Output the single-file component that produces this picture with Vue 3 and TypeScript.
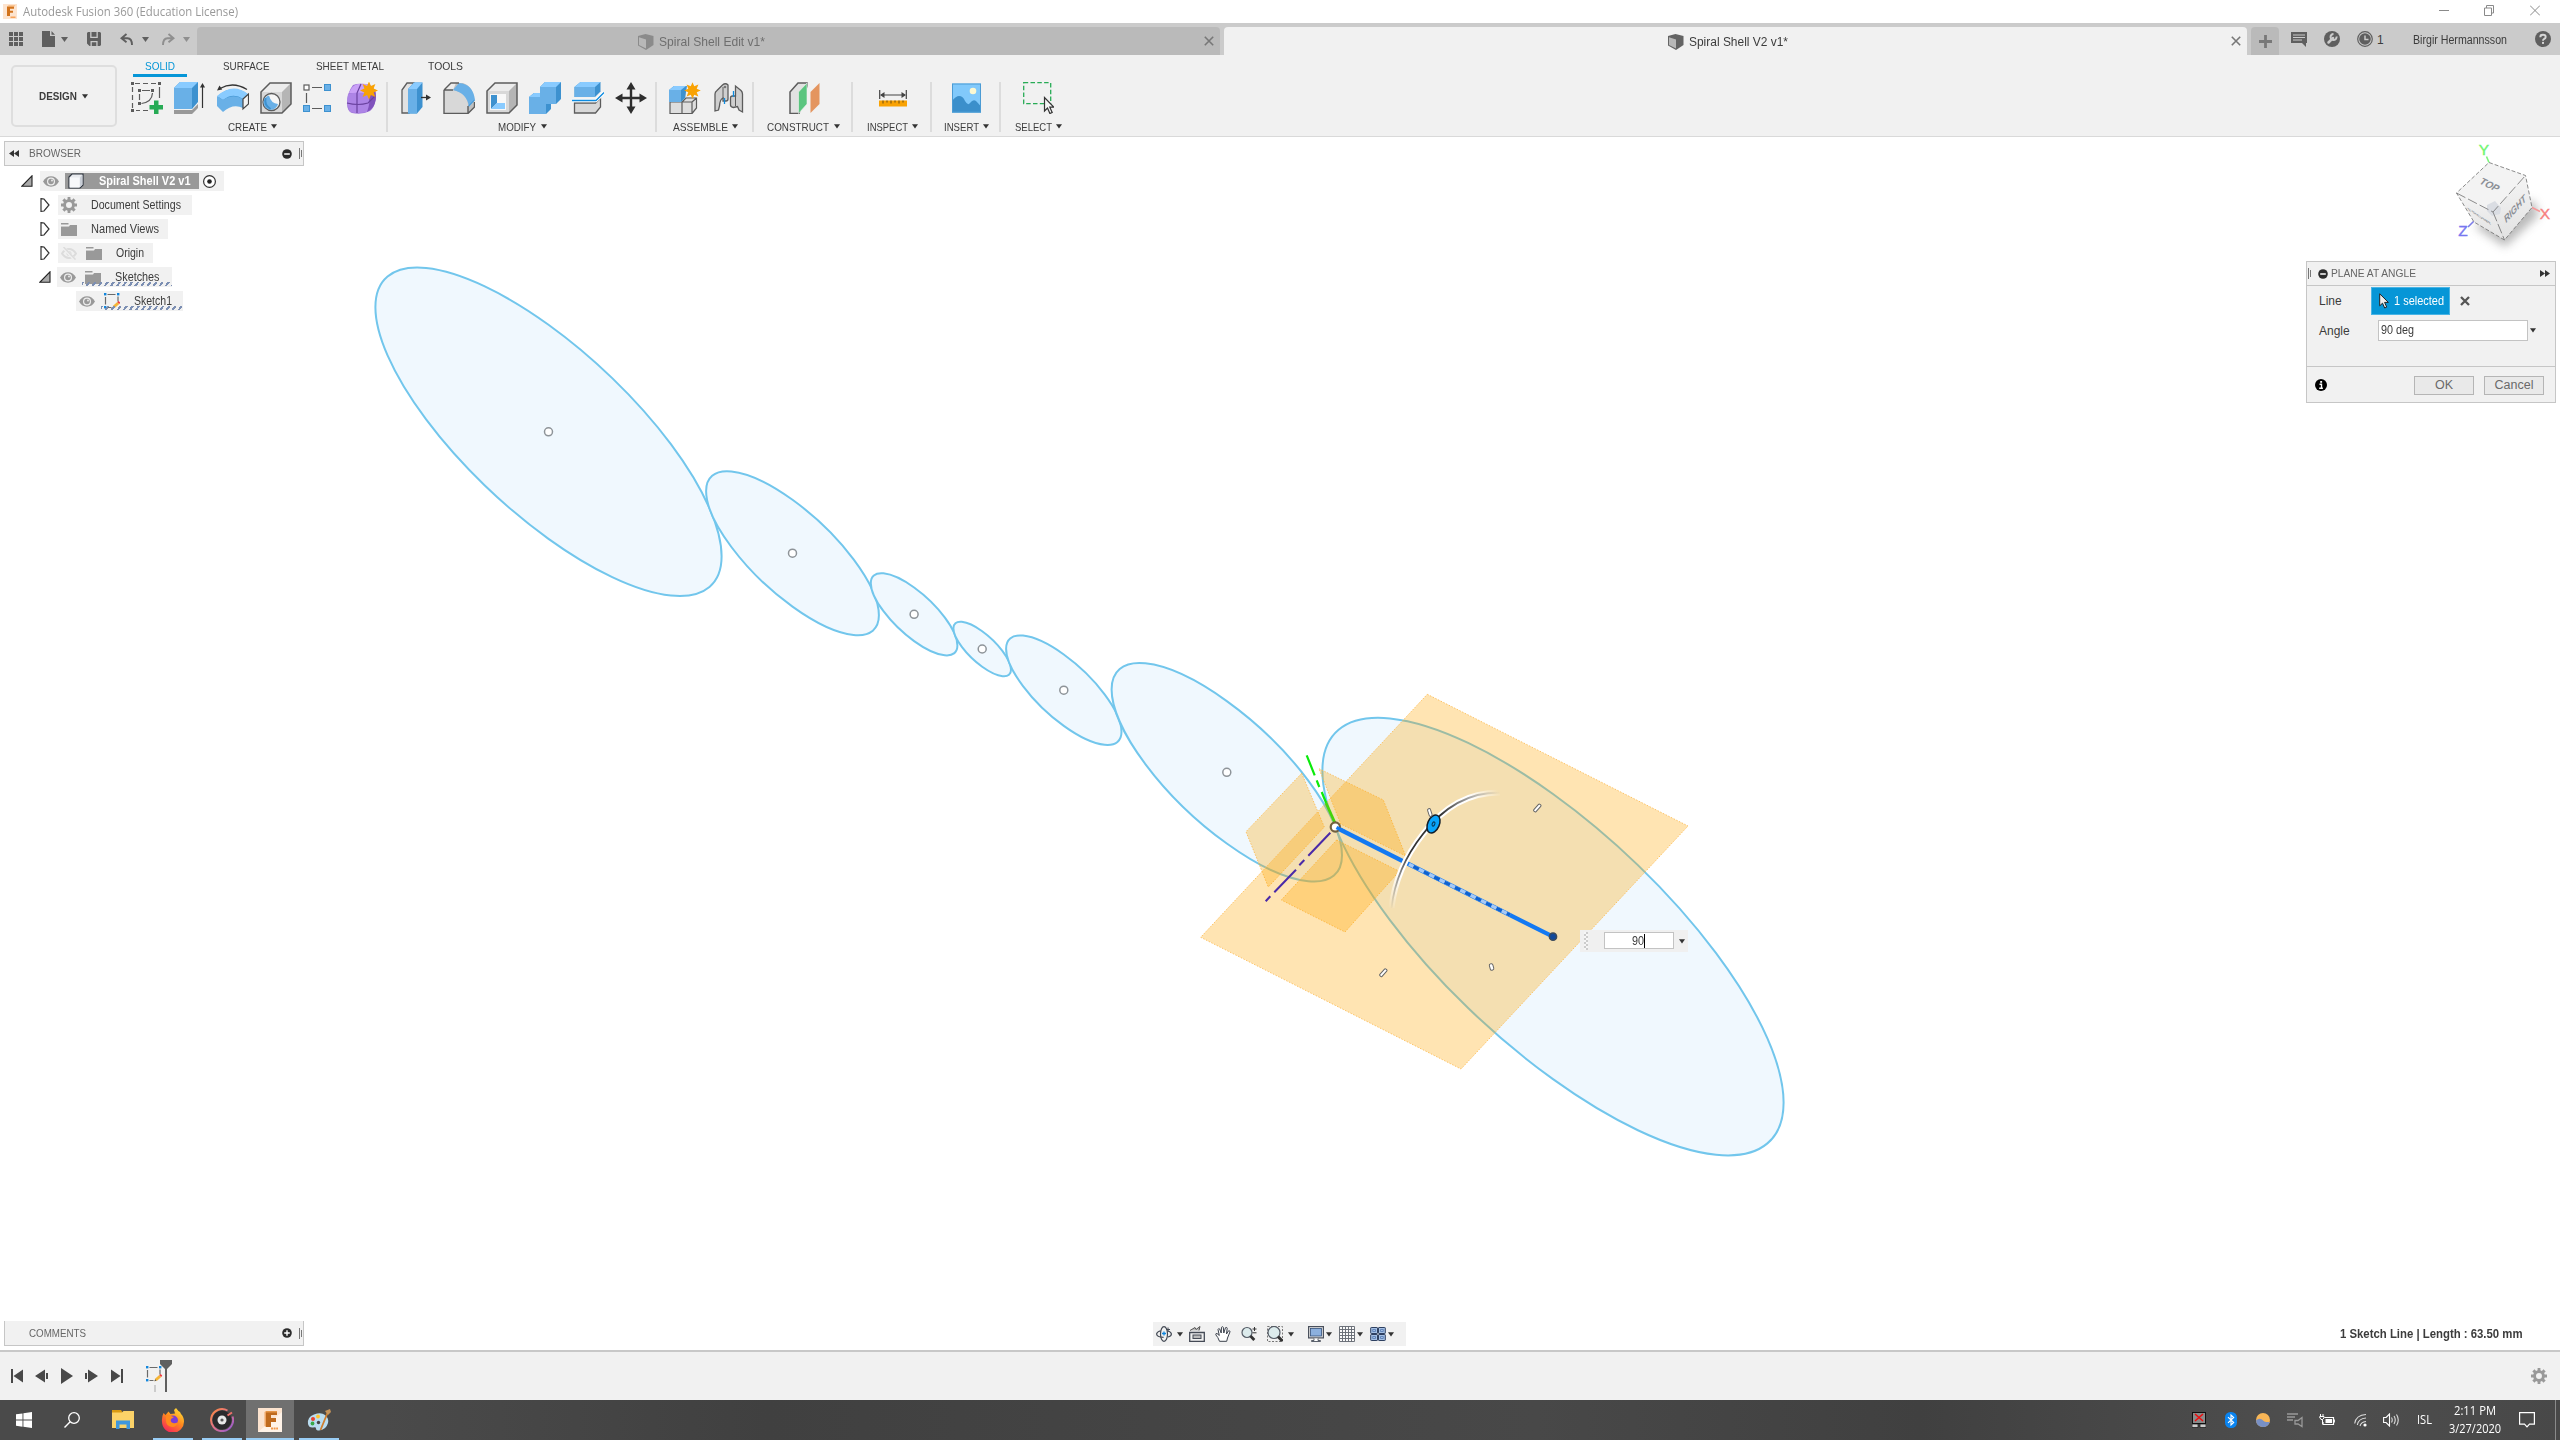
<script setup lang="ts">
import { h } from 'vue'

type IconDef = [number, number, string]

const K = '#5c5c5c'
const star = 'M0 -9L1.9 -4.6L6.4 -6.4L4.6 -1.9L9 0L4.6 1.9L6.4 6.4L1.9 4.6L0 9L-1.9 4.6L-6.4 6.4L-4.6 1.9L-9 0L-4.6 -1.9L-6.4 -6.4L-1.9 -4.6z'
const gearPath = 'M6.6 0h2.8v2.3l1.5.6L12.500 1.300l2.200 2.200-1.600 1.600.6 1.500H16v2.800h-2.300l-.6 1.500 1.600 1.600-2.200 2.200-1.600-1.600-1.500.6V16H6.600v-2.300l-1.500-.6-1.600 1.600-2.200-2.200 1.600-1.600-.6-1.500H0V6.600h2.300l.6-1.500L1.300 3.500l2.200-2.200 1.600 1.600 1.500-.6zM8 5a3 3 0 1 0 0 6 3 3 0 0 0 0-6z'
const sketchMark = '<g fill="none" stroke="#6a6a6a" stroke-width="1.2"><path d="M3.500 1.500h8M1.500 4v7.500M14 3.500v5M3.500 14.500h4"/></g><g fill="#1186dd"><rect width="2.400" height="2.400"/><rect x="13" width="2.400" height="2.400"/><rect y="13" width="2.400" height="2.400"/></g><path d="M8.500 15.300l.8-2.800 4-3.600 2 2-4 3.600z" fill="#f5b536"/><path d="M13.300 8.900l1.400-.9 1.500 1.600-.9 1.300z" fill="#f0323c"/><path d="M8.500 15.300l.6-2 1.400 1.400z" fill="#555"/>'

const icons: Record<string, IconDef> = {
  fusion: [14, 15, '<rect width="14" height="15" fill="#fde4cf"/><path d="M4 2.500h7v2.300H7v2h3v2H7V12H4z" fill="#d2731c"/><path d="M4 2.500l1.500-1h7L11 2.500z" fill="#f3a55d"/><path d="M7.500 12.500h5v1.500h-5z" fill="#f7a35a"/>'],
  min: [10, 11, '<path d="M0 5.500h10" stroke="#8a8a8a"/>'],
  restore: [10, 11, '<path d="M2.500 3V.5h7v7.500H7.500M.5 3h7v7.500h-7z" fill="none" stroke="#8a8a8a"/>'],
  close: [10, 11, '<path d="M0 .5l10 10M10 .5l-10 10" stroke="#8a8a8a"/>'],
  apps: [14, 14, '<path d="M0 0h4v4H0zM5 0h4v4H5zM10 0h4v4h-4zM0 5h4v4H0zM5 5h4v4H5zM10 5h4v4h-4zM0 10h4v4H0zM5 10h4v4H5zM10 10h4v4h-4z" fill="#5f5f5f"/>'],
  file: [13, 16, '<path d="M0 0h8v5h5v11H0zM9.500 0l3.500 3.800H9.500z" fill="#5f5f5f"/>'],
  caret: [7, 5, '<path d="M0 0h7L3.500 5z" fill="#5f5f5f"/>'],
  caretLight: [7, 5, '<path d="M0 0h7L3.500 5z" fill="#8f8f8f"/>'],
  caretDark: [6, 5, '<path d="M0 .2h6L3 4.600z" fill="#333"/>'],
  save: [14, 14, '<path d="M1 0h2.200v6h7.600V0H13l1 1v12l-1 1H2.500L0 11.500V1zM4.500 0h5v4.800h-5zM3.500 9v5h1.300v-3.700h4.500V14h1.300V9z" fill="#5f5f5f" fill-rule="evenodd"/>'],
  undo: [13, 13, '<path d="M6.500 1L1.500 5.200l5 4M2 5.200h5.500q4.500.3 4.500 6.800" fill="none" stroke="#5f5f5f" stroke-width="1.900"/>'],
  redo: [13, 13, '<path d="M6.500 1l5 4.200-5 4M11 5.200H5.500Q1 5.500 1 12" fill="none" stroke="#8f8f8f" stroke-width="1.900"/>'],
  docGrey: [16, 16, '<path d="M0 2l7.500-2L15.500 2v9l-7.500 5L0 11.500z" fill="#8b8b8b"/><path d="M1 3.200l7 2.300v9L1 11z" fill="#b8b8b8"/>'],
  docDark: [16, 16, '<path d="M0 2l7.500-2L15.500 2v9l-7.500 5L0 11.500z" fill="#646464"/><path d="M1 3.200l7 2.300v9L1 11z" fill="#b8b8b8"/>'],
  x: [10, 10, '<path d="M.8.800l8.400 8.400M9.200.800L.8 9.200" stroke="#777" stroke-width="1.600"/>'],
  xBold: [10, 10, '<path d="M1 1l8 8M9 1L1 9" stroke="#555" stroke-width="2.300"/>'],
  plus: [13, 13, '<path d="M6.500 0v13M0 6.500h13" stroke="#787878" stroke-width="2.800"/>'],
  chat: [16, 15, '<path d="M0 0h16v11h-1v4l-4-4H0z" fill="#5f5f5f"/><path d="M2 3h12M2 5.500h12M2 8h9" stroke="#cbcbcb"/>'],
  wrench: [16, 16, '<circle cx="8" cy="8" r="8" fill="#5f5f5f"/><path d="M4.500 11.500L9 7" stroke="#cbcbcb" stroke-width="2.500" stroke-linecap="round"/><path d="M12.500 5.500a3 3 0 1 1-3-2.500" fill="none" stroke="#cbcbcb" stroke-width="2"/>'],
  clock: [16, 16, '<circle cx="8" cy="8" r="7.300" fill="none" stroke="#5f5f5f" stroke-width="1.200"/><circle cx="8" cy="8" r="5.800" fill="#5f5f5f"/><path d="M8 4.500V8.500h3.500" fill="none" stroke="#cbcbcb" stroke-width="1.500"/>'],
  help: [16, 16, '<circle cx="8" cy="8" r="8" fill="#5f5f5f"/><path d="M5.300 6.200Q5.300 3.700 8 3.700t2.700 2.300Q10.700 7.300 9 8 8 8.500 8 9.700" fill="none" stroke="#d6d6d6" stroke-width="1.900"/><rect x="7" y="10.900" width="2" height="2" fill="#d6d6d6"/>'],
  // toolbar
  sketch: [32, 32, `<g fill="none" stroke="${K}" stroke-width="1.200"><path d="M4 1.500h5m3 0h5m3 0h5M1.500 5v5m0 3v5m0 3v5M28.500 5v11M5 28.500h4m3 0h5M11 8.500h8M8.500 12v6M21.500 11q-.5 9-11 10.500"/></g><g fill="${K}"><rect width="3" height="3"/><rect x="27" width="3" height="3"/><rect y="27" width="3" height="3"/><rect x="7" y="7" width="3" height="3"/><rect x="20" y="7" width="3" height="3"/><rect x="7" y="20" width="3" height="3"/></g><path d="M23 18.500h4.500v4.500H32v4.500h-4.500V32H23v-4.500h-4.500V23H23z" fill="#27ab55"/>`],
  extrude: [32, 32, '<path d="M0 28h18l6-6v4l-6 6H0z" fill="#999"/><path d="M0 6l6-6h18v20l-6 7H0z" fill="#3d91cf"/><path d="M0 6h18v21H0z" fill="#69b0e7"/><path d="M0 6l6-6h18l-6 6z" fill="#89cbff"/><path d="M28.500 3v23" stroke="#333" stroke-width="1.200"/><path d="M26 5.500L28.500 1 31 5.500z" fill="#333"/>'],
  sweep: [32, 32, '<path d="M2 13Q16 1 32 13l-6 9Q16 16 6 24L0 20z" fill="#3d91cf"/><path d="M0 14Q16 0 31 12l-5 5Q16 10 6 18z" fill="#89cbff"/><path d="M0 14l6 4v12l-6-6zM6 18Q16 11 26 17v9Q16 21 6 30z" fill="#69b0e7"/><path d="M26 17l5.500-5v10L26 27z" fill="#f4f4f4" stroke="#444" stroke-width="1.200"/><path d="M3 6.500Q16-1 30 7.500" fill="none" stroke="#333" stroke-width="1.300"/><path d="M0 8.500l2.500-5 2.700 4z" fill="#333"/>'],
  hole: [32, 32, `<path d="M1 10l9-9h21v21l-9 9H1z" fill="#b5b5b5"/><path d="M1 10h21v21H1z" fill="#d8d8d8"/><path d="M1 10l9-9h21l-9 9z" fill="#ececec"/><path d="M1 10l9-9h21v21l-9 9H1z" fill="none" stroke="${K}" stroke-width="1.500"/><circle cx="11.500" cy="20" r="8.500" fill="#f6f6f6" stroke="${K}" stroke-width="1.300"/><path d="M9 13.500q2 8 9 8.500a7.300 7.300 0 1 1-9-8.500" fill="#69b0e7"/><path d="M5.500 16q-1.500 7 5 11" fill="none" stroke="#3d91cf" stroke-width="2"/>`],
  pattern: [32, 32, `<g stroke="${K}" stroke-width="1.200" fill="none"><path d="M9 5.500h10M9 26.500h10M3.500 11v10"/></g><rect x="1" y="3" width="5" height="5" fill="#fff" stroke="${K}" stroke-width="1.200"/><g fill="#69b0e7" stroke="#3d91cf" stroke-width="1"><rect x="21.500" y="2.500" width="6" height="6"/><rect x=".5" y="23.500" width="6" height="6"/><rect x="21.500" y="23.500" width="6" height="6"/></g>`],
  form: [32, 32, `<path d="M7 3q5-2 12-1 6 0 9 5 3 6 1 13-1 6-5 9-8 4-18 2-5-2-5-10 0-10 6-18z" fill="#9e74d8"/><path d="M3 11q3-8 9-9 7-1 12 1-4 3-6 9z" fill="#c9a0f7"/><path d="M22 13l7-6q2 9 0 14-2 6-8 9z" fill="#8052bc"/><path d="M2 12q10-3 20 0 3 8-1 18-9 2-17 0-4-8-2-18z" fill="#ad84e6"/><path d="M11 11v20M1 21q11 3 21 0l7-7M11 11l4-9" fill="none" stroke="#6a429f" stroke-width="1.200"/><g transform="translate(23 8.500)"><path d="${star}" fill="#f9a203" /></g>`],
  press: [31, 32, `<path d="M1 8l5-7h7L8 8v23H1z" fill="#e2e2e2" stroke="${K}" stroke-width="1.300"/><path d="M7 7l6-6.500h8.500V25L16 31.500H7z" fill="#3d91cf"/><path d="M7 7h9v24.500H7z" fill="#69b0e7"/><path d="M7 7l6-6.500h8.500L16 7z" fill="#89cbff"/><path d="M20 15.500h6" stroke="#333" stroke-width="1.300"/><path d="M25 12.500l5 3-5 3z" fill="#333"/>`],
  fillet: [32, 32, `<path d="M1 8l7-7h12Q31 5 31.500 20v5L25 31.500H1z" fill="#c0c0c0"/><path d="M1 8h8q16 2 16 16v7.500H1z" fill="#d8d8d8"/><path d="M1 8l7-7h5L10 8z" fill="#ececec"/><path d="M10 8l6-7q14 1 16 17l-6 7Q24 11 10 8z" fill="#69b0e7"/><path d="M25.500 24l6-6" stroke="#3d91cf"/><path d="M10 8H1M1 8l7-7h8M1 8v23.500h24l6.500-6.500v-5M25 31V24" fill="none" stroke="${K}" stroke-width="1.400"/>`],
  shell: [32, 32, `<path d="M1 9l8-8h22v22l-8 8H1z" fill="#b5b5b5"/><path d="M1 9h22v22H1z" fill="#d8d8d8"/><path d="M1 9l8-8h22l-8 8z" fill="#ececec"/><path d="M1 9l8-8h22v22l-8 8H1z" fill="none" stroke="${K}" stroke-width="1.500"/><path d="M4 12h16v16H4z" fill="#f8f8f8"/><path d="M5 13h6v8l-6 6z" fill="#3d91cf"/><path d="M5 27l6-6h8v6z" fill="#89cbff"/>`],
  combine: [32, 32, '<path d="M0 15l5-4h6V5l5-5h16v17l-5 5h-5v5l-5 5H0z" fill="#3d91cf"/><path d="M0 15h11V5h16v17H17v10H0z" fill="#69b0e7"/><path d="M0 15l5-4h6v4zM11 5l5-5h16l-5 5z" fill="#89cbff"/>'],
  split: [32, 32, `<path d="M2.500 21h21l5-5v9l-5 6h-21z" fill="#d8d8d8" stroke="${K}" stroke-width="1.300"/><path d="M2.500 5l6-5h20v9.500L23 15H2.500z" fill="#3d91cf"/><path d="M2.500 5H23v10H2.500z" fill="#69b0e7"/><path d="M2.500 5l6-5h20L23 5z" fill="#89cbff"/><path d="M0 18.500h24l8-8" fill="none" stroke="#fff" stroke-width="3.500"/><path d="M0 18.500h24l8-8" fill="none" stroke="#0d8be0" stroke-width="1.300"/>`],
  move: [32, 32, '<path d="M16 4v24M4 16h24" stroke="#2e2e2e" stroke-width="2.400"/><path d="M16 0l4.500 7.500h-9zM16 32l4.500-7.500h-9zM0 16l7.500-4.500v9zM32 16l-7.500-4.500v9z" fill="#2e2e2e"/>'],
  newComp: [33, 32, `<path d="M1 21h12V9l4-3v9h10v11l-5 5.500H1z" fill="#d8d8d8"/><path d="M1 20h12v11.500H1zM13 20h10v11.500H13zM13 20l4-4h10.500v10L23 31.500M23 20l4.500-4" fill="#dedede" stroke="${K}" stroke-width="1.200"/><path d="M0 8l5-4h13l-2 12-4 4H0z" fill="#3d91cf"/><path d="M0 8h12v12H0z" fill="#69b0e7"/><path d="M0 8l5-4h12l-5 4z" fill="#89cbff"/><g transform="translate(23.500 8.500) scale(.92)"><path d="${star}" fill="#f9a203"/></g>`],
  joint: [30, 32, `<g fill="#cfcfcf" stroke="${K}" stroke-width="1.300"><path d="M1 12q0-2 2-3.500L8.500 3q3-2.500 5.500 0v14q0 2-2 2h-3v-3q-3 1-3.500 8l-1 4-3.500 1z"/><path d="M28.500 12q0-2-1.500-3.500L21.500 4v10h-3q-2 0-2 2v7q0 2 3 2.500l4-1 1.500 3.500 3.500 2z"/></g><path d="M21.500 14v10M9 5v12" stroke="${K}" fill="none"/><path d="M10.500 16v6M19.500 9v6" stroke="#0d8be0" stroke-width="1.300"/><circle cx="11" cy="5" r="1.300" fill="#777"/>`],
  construct: [31, 32, `<path d="M1 10l8-9h9v3l-8 27.500H1z" fill="#e2e2e2" stroke="${K}" stroke-width="1.500"/><path d="M9.500 31.500V10L18 1v21z" fill="#5bc57f" stroke="#f1f1f1" stroke-width=".6"/><path d="M21.500 31V10L30.500 1v21z" fill="#e4955f"/>`],
  measure: [28, 32, '<path d="M.7 8v9M27.300 8v9M2 13h24" stroke="#444" stroke-width="1.200"/><path d="M1 13l4.500-3v6zM27 13l-4.500-3v6z" fill="#444"/><rect y="18.500" width="28" height="6" fill="#f9a203"/><path d="M4 18.500v3M8 18.500v2M12 18.500v3M16 18.500v2M20 18.500v3M24 18.500v2" stroke="#6b4a10"/>'],
  picture: [29, 32, '<rect y="1.500" width="29" height="29" fill="#81c9fb"/><circle cx="21" cy="9" r="3.300" fill="#fbf8d2"/><path d="M0 19q4-5 7-5 4 0 6 5 3 5 5 2 3-4 6-2 2 2 5 5.500v6H0z" fill="#3b8fcb"/><rect x=".5" y="2" width="28" height="28" fill="none" stroke="#4b9bd4"/>'],
  select: [31, 32, '<rect x=".7" y=".7" width="27" height="21" fill="none" stroke="#27ab55" stroke-width="1.300" stroke-dasharray="4.500 2.300"/><path d="M21.500 15.500v13.500l3-3 2.400 5.500 2.300-1-2.400-5.300h4z" fill="#f4f4f4" stroke="#333" stroke-width="1.200"/>'],
  // browser
  rewind: [10, 7, '<path d="M5 0v7L0 3.500zM10 0v7L5 3.500z" fill="#333"/>'],
  forward: [10, 7, '<path d="M0 0v7l5-3.500zM5 0v7l5-3.500z" fill="#333"/>'],
  minus: [10, 10, '<circle cx="5" cy="5" r="4.800" fill="#2b2b2b"/><path d="M2.200 5h5.600" stroke="#fff" stroke-width="1.500"/>'],
  add: [10, 10, '<circle cx="5" cy="5" r="4.800" fill="#2b2b2b"/><path d="M2.200 5h5.600M5 2.200v5.600" stroke="#fff" stroke-width="1.400"/>'],
  grip: [3, 11, '<path d="M.5 0v11M2.500 2v7" stroke="#777"/>'],
  open: [12, 12, '<path d="M11 .8v10.500H.8z" fill="#aaa" stroke="#222" stroke-width="1.100"/>'],
  shut: [10, 14, '<path d="M1 .7l3 .3 5 6-5 6-3 .4z" fill="#fff" stroke="#333" stroke-width="1.200"/>'],
  eye: [16, 11, '<path d="M0 5.500Q3 .3 8 .3t8 5.200Q13 10.700 8 10.700T0 5.500z" fill="#999"/><circle cx="8" cy="5.500" r="4" fill="#eee"/><circle cx="8" cy="5.500" r="2.800" fill="#999"/><circle cx="9" cy="4.500" r=".9" fill="#eee"/>'],
  eyeOff: [16, 13, '<path d="M1 6.500Q4 2 8 2t7 4.500Q12 11 8 11T1 6.500z" fill="none" stroke="#dcdcdc" stroke-width="2"/><circle cx="8" cy="6.500" r="2.500" fill="#dcdcdc"/><path d="M2 0l12 13" stroke="#f1f1f1" stroke-width="3"/><path d="M2.500 0l12 12.500" stroke="#dcdcdc" stroke-width="1.500"/>'],
  cube: [16, 16, '<path d="M1 4l3-3h11v11l-3 3H1z" fill="#e8eaee" stroke="#2f3640" stroke-width="1.200"/><path d="M1.600 4.500H11.500v10h-9.900z" fill="#f7f8fa"/><path d="M12 4.300l2.500-2.500v10L12 14.300z" fill="#c9ced6"/>'],
  radio: [13, 13, '<circle cx="6.500" cy="6.500" r="5.900" fill="#fff" stroke="#333" stroke-width="1.200"/><circle cx="6.500" cy="6.500" r="2.300" fill="#222"/>'],
  gear: [16, 16, `<path d="${gearPath}" fill="#999" fill-rule="evenodd"/>`],
  folder: [16, 13, '<path d="M0 0h7.500v1.600H0zM9 2h7v11H0V3.500h8z" fill="#999"/><path d="M0 2.600h7.500L9 1h-1" stroke="#f1f1f1" stroke-width=".9" fill="none"/>'],
  sketchItem: [16, 16, sketchMark],
  info: [12, 12, '<circle cx="6" cy="6" r="6" fill="#000"/><path d="M4.500 5.200h2V9M4.200 9.200h3.700" stroke="#fff" stroke-width="1.400" fill="none"/><rect x="5.200" y="2" width="1.900" height="1.800" fill="#fff"/>'],
  pick: [10, 16, '<path d="M.7.800v12l2.800-2.600 2.200 4.800 2-.9-2.100-4.700h3.800z" fill="#eee" stroke="#222"/>'],
  // navigation bar
  orbit: [16, 16, '<g fill="none" stroke="#444a55" stroke-width="1.200"><ellipse cx="8" cy="8" rx="3.500" ry="7.300"/><path d="M4.500 4.700Q.6 6 .6 8q0 3 7 3.300M11.500 4.700Q15.400 6 15.400 8q0 2.400-3.400 3"/></g><path d="M8 5.500v4M6 7.500h4" stroke="#1186dd" stroke-width="1.300"/><path d="M10 3.500h4M12 1.500v4" stroke="#444a55"/>'],
  look: [16, 16, '<path d="M.7 6.500h14.600v8.800H.7z" fill="#f1f1f1" stroke="#444a55" stroke-width="1.300"/><rect x="4" y="9" width="8" height="3.500" fill="#bbb" stroke="#444a55"/><path d="M1 4.500l5-3 1 2 4-3-1 4" fill="#bbb" stroke="#555" stroke-width="1"/>'],
  hand: [16, 16, '<path d="M4.500 15.300Q3 11 .8 8.800.5 7.300 2 7.500l2.300 2L3 3.500Q3.500 2 4.700 3l1.500 4L6.500 1.300Q7.500 0 8.300 1.300L8.800 7 10.500 1.700Q12 .9 12.200 2.200L11.500 8l2-3.200q1.600-.3 1.500 1L12.500 12l-.8 3.300z" fill="#fff" stroke="#3b414c" stroke-width="1"/>'],
  zoom: [16, 16, '<circle cx="6" cy="6.500" r="5" fill="#dcebec" stroke="#555c66" stroke-width="1.200"/><path d="M9.500 10l3.800 4" stroke="#333" stroke-width="2.800"/><path d="M11.500 3h4M13.500 1v4M11.500 6.800h4" stroke="#333" stroke-width="1"/>'],
  fit: [16, 16, '<rect x=".5" y=".5" width="15" height="15" fill="none" stroke="#777" stroke-dasharray="2 1.500"/><circle cx="7" cy="6.500" r="6" fill="#dcebec" stroke="#555c66" stroke-width="1.200"/><path d="M11 10.500l4.300 4.500" stroke="#333" stroke-width="3"/>'],
  display: [16, 16, '<rect x=".6" y=".6" width="14.800" height="11.300" fill="#e8e8e8" stroke="#4a505c" stroke-width="1.200"/><rect x="2.500" y="2.500" width="11" height="7.500" fill="#8cb0de" stroke="#33527c" stroke-width=".8"/><path d="M6 12.500v2H3.500v1h9v-1H10v-2" fill="#fff" stroke="#4a505c" stroke-width=".9"/>'],
  grid: [16, 16, '<path d="M.5.500h15v15H.5zM.5 3.500h15M.5 6.500h15M.5 9.500h15M.5 12.500h15M3.500.500v15M6.500.500v15M9.500.500v15M12.500.500v15" fill="#fafafa" stroke="#666c74" stroke-width=".95"/>'],
  views: [16, 16, '<g fill="#a5c0e4" stroke="#2d3f60" stroke-width="1"><rect x=".7" y="1.500" width="6.800" height="6" rx=".6"/><rect x="8.500" y="1.500" width="6.800" height="6" rx=".6"/><rect x=".7" y="8.500" width="6.800" height="6" rx=".6"/><rect x="8.500" y="8.500" width="6.800" height="6" rx=".6"/></g><g fill="none" stroke="#5b7fb5" stroke-width=".9"><path d="M2.700 3.500h2.800v2H2.700zM10.500 3.500h2.800v2h-2.800zM2.700 10.500h2.800v2H2.700zM10.500 10.500h2.800v2h-2.800z"/></g>'],
  // timeline
  first: [12, 14, '<path d="M0 0h2v14H0zM12 0.500v13L2.500 7z" fill="#484848"/>'],
  prev: [13, 14, '<path d="M10 .5v13L0 7zM11 4h2v6h-2z" fill="#484848"/>'],
  play: [12, 16, '<path d="M0 0l12 8-12 8z" fill="#484848"/>'],
  next: [13, 14, '<path d="M3 .5v13L13 7zM0 4h2v6H0z" fill="#484848"/>'],
  last: [12, 14, '<path d="M10 0h2v14h-2zM0 .5v13L9.500 7z" fill="#484848"/>'],
  // taskbar
  win: [16, 16, '<path d="M0 2.300L6.500 1.400V7.600H0zM7.400 1.300L16 0v7.600H7.400zM0 8.500h6.500v6.200L0 13.800zM7.400 8.500H16V16l-8.600-1.200z" fill="#fff"/>'],
  find: [16, 16, '<circle cx="10" cy="6" r="5.300" fill="none" stroke="#fff" stroke-width="1.300"/><path d="M6.200 9.800L.5 15.500" stroke="#fff" stroke-width="1.400"/>'],
  explorer: [22, 20, '<path d="M0 0h9l2 3H0z" fill="#d99a11"/><path d="M0 2.500h10l1.500-1.500H22V18H0z" fill="#fbd268"/><path d="M4 19V10.500h14V19h-3.500v-4.500h-7V19z" fill="#3f97dd"/>'],
  firefox: [24, 24, '<defs><linearGradient id="ff" x1=".8" y1="0" x2=".2" y2="1"><stop offset="0" stop-color="#ffe13a"/><stop offset=".45" stop-color="#ff8a1d"/><stop offset="1" stop-color="#f5205f"/></linearGradient></defs><path d="M2.500 5l2 2 3-3.500L9.500 6l4.500-.5L13 2l2-2q2 3 4 4l1 2q3 3 3 7.500A11 11 0 0 1 1 14Q.5 9 2.500 5z" fill="url(#ff)"/><circle cx="12" cy="12.500" r="5" fill="#7a3ed6"/><path d="M5 8q4-2 6 .5l2 .5-3 2q-1 3 2 4 4 1 5-2-1 6-6 6-6-1-6-6z" fill="#ff8a1d"/>'],
  music: [24, 24, '<defs><linearGradient id="mu" x1="0" y1="0" x2="1" y2="1"><stop offset="0" stop-color="#ff8a3c"/><stop offset=".5" stop-color="#e0708c"/><stop offset="1" stop-color="#8a5ad8"/></linearGradient></defs><circle cx="12" cy="12" r="9.500" fill="#2a2a2c"/><path d="M17.500 2.500A11 11 0 1 0 22.500 8.500" fill="none" stroke="url(#mu)" stroke-width="2"/><path d="M22 4.500l-4.500 3" stroke="#f0706a" stroke-width="2"/><circle cx="12" cy="12" r="4.500" fill="#e8e8e8"/><circle cx="12" cy="12" r="1.600" fill="#555"/>'],
  fusionBig: [24, 24, '<rect width="24" height="24" fill="#fbe3cf"/><path d="M0 24L24 4v20z" fill="#fff3e8"/><path d="M8 3h11v4h-6v3h5v4h-5v5H8z" fill="#bf6a1d"/><path d="M6.500 4L8 3v16l-1.500-1z" fill="#f0a868"/><path d="M8 3h11v1.500H8z" fill="#e49548"/><path d="M13 20.500h7" stroke="#f29a4c" stroke-width="2.200" stroke-dasharray="2 .6"/>'],
  paint: [24, 22, '<path d="M1 15Q0 8 7 5.500 14 3 18 6q4 3 3 8-2 7-9 7.500-3 0-3-2t-3-1Q2 19 1 15z" fill="#b9dcf0"/><circle cx="6" cy="10" r="2" fill="#e8412d"/><circle cx="5.500" cy="14.500" r="1.900" fill="#37a849"/><circle cx="11" cy="7.500" r="1.900" fill="#ffc42d"/><circle cx="11.500" cy="13.500" r="1.700" fill="#444"/><path d="M20.500 4L13.500 21" stroke="#cf7d2e" stroke-width="1.800"/><path d="M18 2l5-2 1 3-3 3z" fill="#c5935a"/>'],
  net: [14, 16, '<rect x=".5" y=".5" width="13" height="11" fill="#8a8a8a" stroke="#111"/><path d="M3 2l8 7M11 2L3 9" stroke="#f00a0a" stroke-width="1.500"/><path d="M0 12h6v3.500H0zM8 12h6v3.500H8z" fill="#ccc" stroke="#111" stroke-width=".7"/>'],
  bt: [12, 16, '<rect width="12" height="16" rx="5.500" fill="#0a84f0"/><path d="M3 5.200l5.700 5.300L6 13V3l2.700 2.500L3 10.800" fill="none" stroke="#fff" stroke-width="1.100"/>'],
  sun: [14, 14, '<circle cx="7" cy="7" r="7" fill="#f8b656"/><path d="M0 7.500q3-3 6-1 2 3 7.700 2.500A7 7 0 0 1 0 7.500z" fill="#7890c5"/>'],
  lines: [16, 16, '<path d="M0 2h11M0 5h8M0 8h6" stroke="#999" stroke-width="1.400"/><path d="M8 8.500h3l4-3v9l-4-2.500H8z" fill="none" stroke="#999" stroke-width="1.300"/>'],
  battery: [16, 14, '<path d="M5.500 4.500h9v7H4V9" fill="none" stroke="#fff" stroke-width="1.200"/><path d="M6.500 6h6.500v4H6.500z" fill="#fff"/><path d="M15.400 6.500v3M1.500 1v3M4 1v3M.5 3.500h4.500v1.500L3.500 6.500v4.500M.5 4l1.500 2.500h1.500" stroke="#fff" fill="none"/>'],
  wifi: [13, 14, '<path d="M.7 10.500Q2 2 12 1.500M3.300 12Q4.500 5.500 12 5M6 13Q7 9 12 8.500" fill="none" stroke="#ddd" stroke-width="1.100"/><circle cx="11" cy="12" r="1.600" fill="#fff"/>'],
  vol: [16, 14, '<path d="M.6 4.500h2.500L6.500 1v12L3.100 9.500H.6z" fill="none" stroke="#fff" stroke-width="1.100"/><path d="M8.500 4.500q1.500 2.500 0 5M11 3q2.500 4 0 8M13.500 1.500q3.500 5.500 0 11" fill="none" stroke="#ddd" stroke-width="1.100"/>'],
  note: [16, 16, '<path d="M.6.600h14.800v11.500H10.500L8 14.800 5.500 12.100H.6z" fill="none" stroke="#fff" stroke-width="1.200"/>'],
}

const Ico = (p: { n: string }) => {
  const [w, ht, body] = icons[p.n]
  return h('svg', { width: w, height: ht, viewBox: `0 0 ${w} ${ht}`, innerHTML: body })
}
Ico.props = ['n']

// Condenses or widens a label until it occupies the given width
const vFit = {
  mounted(el: HTMLElement, b: { value: number }) {
    const w = el.getBoundingClientRect().width
    el.style.transformOrigin = '0 50%'
    el.style.transform = `scaleX(${(b.value / w).toFixed(4)})`
    el.style.marginRight = `${(b.value - w).toFixed(2)}px`
  },
}

const strip: [string, number][] = [
  ['apps', 9], ['file', 19], ['caret', 6], ['save', 19], ['undo', 19], ['caret', 9], ['redo', 13], ['caretLight', 8],
]

const modes = [
  { t: 'SOLID', w: 30, left: 27.500, on: true },
  { t: 'SURFACE', w: 46.500, left: 48.500 },
  { t: 'SHEET METAL', w: 68, left: 46.500 },
  { t: 'TOOLS', w: 35, left: 44 },
]

const groups = [
  { t: 'CREATE', w: 39, box: 271, pad: 14, gap: 11, ic: ['sketch', 'extrude', 'sweep', 'hole', 'pattern', 'form'] },
  { t: 'MODIFY', w: 38, box: 269, pad: 13, gap: 11, ic: ['press', 'fillet', 'shell', 'combine', 'split', 'move'] },
  { t: 'ASSEMBLE', w: 55, box: 97, pad: 12, gap: 12, ic: ['newComp', 'joint'] },
  { t: 'CONSTRUCT', w: 62, box: 99, pad: 35, gap: 0, ic: ['construct'] },
  { t: 'INSPECT', w: 41, box: 79, pad: 26, gap: 0, ic: ['measure'] },
  { t: 'INSERT', w: 35, box: 69, pad: 20, gap: 0, ic: ['picture'] },
  { t: 'SELECT', w: 37, box: 74, pad: 22, gap: 0, ic: ['select'] },
]

const tree = [
  { t: 'Document Settings', w: 90, ind: 40, box: 134, arrow: 'shut', ic: ['gear'], hatch: false },
  { t: 'Named Views', w: 68, ind: 40, box: 110, arrow: 'shut', ic: ['folder'], hatch: false },
  { t: 'Origin', w: 28, ind: 40, box: 95, arrow: 'shut', ic: ['eyeOff', 'folder'], hatch: false },
  { t: 'Sketches', w: 44.500, ind: 39, box: 115, arrow: 'open', ic: ['eye', 'folder'], hatch: true },
  { t: 'Sketch1', w: 38, ind: 58, box: 107, arrow: '', ic: ['eye', 'sketchItem'], hatch: true },
]

// Every circle of the sketch projects to the same ellipse shape, scaled about its own centre
const circles = [
  [548.5, 431.8, 173.1], [792.5, 553.2, 86.4], [914.1, 614.3, 43.3], [982.2, 649, 28.8],
  [1063.8, 690.2, 57.7], [1226.8, 772.3, 115.2], [1553, 936.6, 230.6],
]
const matrix = ([x, y, r]: number[]) => {
  const ht = r * 0.9487
  return `matrix(${r} ${ht * 0.7585} 0 ${ht * 0.6517} ${x} ${y})`
}

const nav: [string, number][] = [
  ['orbit', 3], ['caretDark', 5], ['look', 6], ['hand', 10], ['zoom', 10], ['fit', 10], ['caretDark', 5],
  ['display', 14], ['caretDark', 2], ['grid', 7], ['caretDark', 2], ['views', 7], ['caretDark', 2],
]
const player: [string, number][] = [['first', 11], ['prev', 12], ['play', 13], ['next', 12], ['last', 13]]
const apps = [
  { n: 'win', w: 48 }, { n: 'find', w: 48 }, { n: 'explorer', w: 53 }, { n: 'firefox', w: 48, u: 40 },
  { n: 'music', w: 49, u: 40 }, { n: 'fusionBig', w: 48, u: 48, on: true }, { n: 'paint', w: 50, u: 40 },
]
const tray: [string, number][] = [['net', 0], ['bt', 19], ['sun', 19], ['lines', 17], ['battery', 16], ['wifi', 19], ['vol', 16]]
</script>

<template>
  <div class="screen">
    <header class="title">
      <Ico n="fusion" class="logo" />
      <span v-fit="215" class="app-name">Autodesk Fusion 360 (Education License)</span>
      <div class="win">
        <Ico n="min" /><Ico n="restore" /><Ico n="close" />
      </div>
    </header>

    <div class="strip">
      <div class="quick">
        <Ico v-for="([n, g], i) in strip" :key="i" :n="n" :style="{ marginLeft: g + 'px' }" />
      </div>
      <div class="tab first">
        <div class="tab-label"><Ico n="docGrey" /><span v-fit="106">Spiral Shell Edit v1*</span></div>
        <Ico n="x" />
      </div>
      <div class="tab active">
        <div class="tab-label"><Ico n="docDark" /><span v-fit="99">Spiral Shell V2 v1*</span></div>
        <Ico n="x" />
      </div>
      <div class="new-tab"><Ico n="plus" /></div>
      <div class="account">
        <Ico n="chat" /><Ico n="wrench" class="m17" /><Ico n="clock" class="m17" />
        <span class="jobs">1</span>
        <span v-fit="94" class="user">Birgir Hermannsson</span>
        <Ico n="help" class="m28" />
      </div>
    </div>

    <div class="toolbar">
      <div class="design"><span v-fit="38">DESIGN</span><Ico n="caretDark" /></div>
      <div class="tools">
        <div class="modes">
          <div v-for="m in modes" :key="m.t" class="mode" :class="{ on: m.on }" :style="{ marginLeft: m.left + 'px' }">
            <span v-fit="m.w">{{ m.t }}</span>
          </div>
        </div>
        <div class="groups">
          <div v-for="g in groups" :key="g.t" class="group" :style="{ width: g.box + 'px' }">
            <div class="row" :style="{ paddingLeft: g.pad + 'px', gap: g.gap + 'px' }">
              <Ico v-for="n in g.ic" :key="n" :n="n" />
            </div>
            <div class="label"><span v-fit="g.w">{{ g.t }}</span><Ico n="caretDark" /></div>
          </div>
        </div>
      </div>
    </div>

    <main class="canvas">
      <svg class="scene" width="2560" height="1213" viewBox="0 137 2560 1213">
        <defs>
          <linearGradient id="arc" gradientUnits="userSpaceOnUse" x1="1391" y1="910" x2="1500" y2="792">
            <stop offset="0" stop-color="#333" stop-opacity="0" /><stop offset=".35" stop-color="#333" />
            <stop offset=".65" stop-color="#333" /><stop offset="1" stop-color="#333" stop-opacity="0" />
          </linearGradient>
          <linearGradient id="glow" gradientUnits="userSpaceOnUse" x1="1391" y1="910" x2="1500" y2="792">
            <stop offset="0" stop-color="#fff" stop-opacity="0" /><stop offset=".2" stop-color="#fff" />
            <stop offset=".85" stop-color="#fff" /><stop offset="1" stop-color="#fff" stop-opacity="0" />
          </linearGradient>
          <linearGradient id="face" x1="0" y1="0" x2="0" y2="1">
            <stop offset="0" stop-color="#f4f4f4" /><stop offset="1" stop-color="#e2e2e2" />
          </linearGradient>
          <filter id="soft" x="-50%" y="-50%" width="200%" height="200%"><feGaussianBlur stdDeviation="5" /></filter>
        </defs>

        <circle v-for="(c, i) in circles" :key="i" r="1" :transform="matrix(c)" class="profile" />
        <circle v-for="(c, i) in circles.slice(0, 6)" :key="'c' + i" :cx="c[0]" :cy="c[1]" r="4" class="centre" />

        <g class="plane">
          <path d="M1301.700 773.300L1324.300 827 1268.300 887 1246 831.700z" />
          <path d="M1319 768.700L1383.300 800 1405.700 856 1340.700 824z" />
          <path d="M1336.700 840L1399.300 871.300 1345 932 1281.300 900z" />
          <path d="M1427.300 694.300L1688 826 1461 1069 1200.700 937.300z" />
        </g>

        <g stroke="#0bea0b" stroke-width="2.200" fill="none">
          <path d="M1306.700 755.300l8 20M1316.700 780.300l2.600 6.700M1321.700 792l4.500 11" />
          <path d="M1326 803l9 20" stroke="#45d40b" stroke-width="2.800" />
        </g>
        <path d="M1330.300 832.700l-22 23M1304.300 860l-5 5.300M1296 869.700l-21.700 22.600M1270.300 896.300l-4.600 5" stroke="#4a2aa8" stroke-width="2" />
        <path d="M1337 828l216 108.700" stroke="#1379f2" stroke-width="4.200" />
        <path d="M1409 864.300l101 50.700" stroke="#a7c9f5" stroke-width="3.400" />
        <path d="M1409 864.300l101 50.700" stroke="#0f62cf" stroke-width="3.400" stroke-dasharray="6 5.600" stroke-dashoffset="-5" />
        <circle cx="1335.300" cy="827" r="4.600" fill="#fff" stroke="#72613f" stroke-width="2.200" />
        <path d="M1336.500 827.500l8 4" stroke="#1379f2" stroke-width="3.500" />
        <circle cx="1553" cy="936.700" r="3.600" fill="#124a9b" stroke="#3c4b5c" stroke-width="1.500" />

        <path class="arc" d="M1391.500 908Q1396 868 1423 834 1455 792 1500 792.500" stroke="url(#glow)" stroke-width="6" />
        <path class="arc" d="M1391.500 908Q1396 868 1423 834 1455 792 1500 792.500" stroke="url(#arc)" stroke-width="1.800" />
        <ellipse cx="1433.500" cy="824" rx="5.800" ry="9.500" transform="rotate(24 1433.500 824)" fill="#09a4fa" stroke="#111c28" stroke-width="1.500" />
        <ellipse cx="1433.500" cy="824" rx="1.300" ry="2.200" transform="rotate(24 1433.500 824)" fill="none" stroke="#0b3350" />
        <g fill="#fff" stroke="#666" stroke-width="1">
          <rect x="-1.500" y="-4.500" width="3" height="8" rx="1.500" transform="translate(1430 813) rotate(-18)" />
          <rect x="-1.500" y="-4.500" width="3" height="9" rx="1" transform="translate(1537.300 808) rotate(42)" />
          <rect x="-1.500" y="-4.500" width="3" height="9" rx="1" transform="translate(1383.300 972.700) rotate(42)" />
          <rect x="-1.800" y="-3" width="3.600" height="6.500" rx="1.500" transform="translate(1491.500 966.700) rotate(-15)" />
        </g>

        <path d="M2474 226l31 21 34-32-6-15z" fill="#777" opacity=".5" filter="url(#soft)" />
        <path d="M2489 162.500l-2.500-6" fill="none" stroke="#7df57d" stroke-width="1.600" />
        <path d="M2532 207.500l8 4" stroke="#f59a9a" stroke-width="1.800" />
        <path d="M2474 221l-6 6" stroke="#7c7ce8" stroke-width="1.600" />
        <path d="M2489 162.500L2525.500 175.500 2493 212 2456.500 193z" fill="#f3f3f3" />
        <path d="M2456.500 193L2493 212 2504.500 240 2474 222z" fill="url(#face)" />
        <path d="M2525.500 175.500L2532 207.500 2504.500 240 2493 212z" fill="url(#face)" />
        <path d="M2487 205l8-4 6 7-1 6-8 2-5-5z" fill="#dadde3" />
        <g fill="none" stroke="#6f6f6f" stroke-width=".8" stroke-dasharray="4 2">
          <path d="M2489 162.500L2525.500 175.500 2532 207.500 2504.500 240 2474 222 2456.500 193z" />
          <path d="M2456.500 193L2493 212 2525.500 175.500M2493 212l11.500 28" stroke-dasharray="10 3" />
        </g>
        <g class="cube-text">
          <text transform="matrix(.8 .4 -.6 .7 2487.500 187.500)" text-anchor="middle">TOP</text>
          <text transform="matrix(.6 -.68 .25 .9 2516 212)" text-anchor="middle">RIGHT</text>
          <text transform="matrix(.62 .4 .35 .5 2481 218.500)" text-anchor="middle">FRONT</text>
        </g>
        <g class="axis">
          <text x="2484" y="154.500" fill="#6ff56f" stroke="#6ff56f">Y</text>
          <text x="2545" y="218.500" fill="#f77f7f" stroke="#f77f7f">X</text>
          <text x="2463" y="235.500" fill="#7777f0" stroke="#7777f0">Z</text>
        </g>
      </svg>

      <div class="angle-box">
        <i class="dots"></i>
        <div class="angle-input"><span v-fit="12">90</span><b></b></div>
        <Ico n="caretDark" />
      </div>

      <div class="top">
        <aside class="browser">
          <div class="panel-head">
            <Ico n="rewind" class="m4" /><span v-fit="52" class="m10">BROWSER</span>
            <Ico n="minus" class="push" /><Ico n="grip" class="m7" />
          </div>
          <div class="node">
            <Ico n="open" style="margin-left: 21px" />
            <div class="cell root">
              <Ico n="eye" class="m3" />
              <div class="hot"><Ico n="cube" /><span v-fit="91.500">Spiral Shell V2 v1</span></div>
              <Ico n="radio" class="m4" />
            </div>
          </div>
          <div v-for="r in tree" :key="r.t" class="node">
            <div class="twist" :style="{ marginLeft: r.ind + 'px' }"><Ico v-if="r.arrow" :n="r.arrow" /></div>
            <div class="cell" :style="{ width: r.box + 'px' }">
              <Ico v-for="(n, i) in r.ic" :key="n" :n="n" :style="{ marginLeft: (i ? 9 : 3) + 'px' }" />
              <span v-fit="r.w" class="name">{{ r.t }}</span>
              <i v-if="r.hatch" class="hatch"></i>
            </div>
          </div>
        </aside>

        <section class="dialog">
          <div class="d-head">
            <Ico n="grip" class="m1" /><Ico n="minus" class="m7" /><span v-fit="85" class="m3">PLANE AT ANGLE</span>
            <Ico n="forward" class="push" />
          </div>
          <div class="d-body">
            <div class="d-row line">
              <label>Line</label>
              <div class="chip"><Ico n="pick" /><span v-fit="50">1 selected</span></div>
              <Ico n="xBold" class="clear" />
            </div>
            <div class="d-row angle">
              <label>Angle</label>
              <div class="field"><span v-fit="33">90 deg</span></div>
              <Ico n="caretDark" class="m2" />
            </div>
          </div>
          <div class="d-foot">
            <Ico n="info" />
            <div class="btn ok">OK</div>
            <div class="btn">Cancel</div>
          </div>
        </section>
      </div>

      <div class="bottom">
        <div class="panel-head comments">
          <span v-fit="57">COMMENTS</span><Ico n="add" class="push" /><Ico n="grip" class="m7" />
        </div>
        <div class="nav">
          <Ico v-for="([n, g], i) in nav" :key="i" :n="n" :style="{ marginLeft: g + 'px' }" />
        </div>
        <div class="status"><span v-fit="182.500">1 Sketch Line | Length : 63.50 mm</span></div>
      </div>
    </main>

    <div class="timeline">
      <Ico v-for="[n, g] in player" :key="n" :n="n" :style="{ marginLeft: g + 'px' }" />
      <svg class="history" width="30" height="34" viewBox="0 0 30 34">
        <g transform="translate(0 6)" v-html="icons.sketchItem[2]"></g>
        <path d="M14 0h12v4l-5 5v23h-2V9l-5-5z" fill="#5f5f5f" />
        <path d="M8 25h2v7H8z" fill="#ccc" />
      </svg>
      <Ico n="gear" class="push" />
    </div>

    <footer class="taskbar">
      <div v-for="a in apps" :key="a.n" class="slot" :class="{ on: a.on }" :style="{ width: a.w + 'px' }">
        <Ico :n="a.n" />
        <i v-if="a.u" :style="{ width: a.u + 'px' }"></i>
      </div>
      <div class="tray">
        <Ico v-for="[n, g] in tray" :key="n" :n="n" :style="{ marginLeft: g + 'px' }" />
        <span v-fit="15" class="lang">ISL</span>
        <div class="when"><span v-fit="42">2:11 PM</span><span v-fit="52">3/27/2020</span></div>
        <Ico n="note" class="note" />
      </div>
    </footer>
  </div>
</template>

<style>
body { overflow: hidden; background: #fff; }
</style>

<style scoped>
.screen { width: 2560px; height: 1440px; display: flex; flex-direction: column; background: #fff; font: 12px/16px "Liberation Sans", Arial, sans-serif; color: #3c3c3c; overflow: hidden; }
svg { display: block; flex: none; }
span { display: inline-block; white-space: nowrap; flex: none; }
.push { margin-left: auto; }
.m1 { margin-left: 1px; } .m2 { margin-left: 2px; } .m3 { margin-left: 3px; } .m4 { margin-left: 4px; }
.m7 { margin-left: 7px; } .m10 { margin-left: 10px; } .m17 { margin-left: 17px; } .m28 { margin-left: 28px; }

.title { height: 23px; display: flex; align-items: center; color: #999; font: 12px/16px "Open Sans", "Noto Sans", sans-serif; }
.logo { margin-left: 3px; }
.app-name { margin-left: 6px; }
.win { margin: 0 20px 2px auto; display: flex; gap: 35px; }
.win svg:last-child { margin-left: 1px; }

.strip { height: 32px; background: #cbcbcb; display: flex; align-items: flex-end; }
.quick { width: 197px; height: 32px; display: flex; align-items: center; }
.tab { height: 28px; display: flex; align-items: center; background: #bababa; color: #6e6e6e; border-radius: 4px 4px 0 0; }
.tab.first { width: 1023px; }
.tab.active { width: 1023px; margin-left: 4px; background: #f1f1f1; color: #3c3c3c; }
.tab-label { flex: 1; display: flex; align-items: center; justify-content: center; gap: 5px; padding: 1px 0 0 2px; }
.tab > svg { margin-right: 6px; }
.new-tab { width: 28px; height: 28px; margin-left: 4px; display: flex; align-items: center; justify-content: center; background: #bababa; border-radius: 4px 4px 0 0; }
.account { height: 32px; display: flex; align-items: center; margin-left: 12px; }
.jobs { margin-left: 4px; width: 7px; padding-top: 1px; }
.user { margin-left: 29px; padding-top: 1px; }

.toolbar { height: 81px; background: #f1f1f1; border-bottom: 1px solid #d9d9d9; display: flex; }
.design { box-sizing: border-box; width: 106px; height: 62px; margin: 10px 0 0 11px; border: 2px solid #dedede; border-radius: 5px; display: flex; align-items: center; justify-content: center; gap: 5px; padding-right: 2px; font-weight: bold; font-size: 11px; }
.modes { height: 24px; display: flex; font-size: 11px; }
.mode { height: 21.500px; box-sizing: border-box; padding-top: 3px; }
.mode.on { color: #0696d7; background: linear-gradient(#0696d7, #0696d7) bottom/100% 3px no-repeat; padding: 3px 12px 0; transform: translateX(-12px); margin-right: -24px; }
.groups { display: flex; }
.group { position: relative; height: 56px; box-sizing: border-box; display: flex; flex-direction: column; }
.group:not(:last-child) { background: linear-gradient(#dcdcdc, #dcdcdc) right 3px/2px 50px no-repeat; }
.row { height: 36px; display: flex; align-items: center; padding-top: 1px; box-sizing: border-box; }
.label { display: flex; align-items: center; justify-content: center; gap: 4px; font-size: 11px; height: 16px; margin-top: 4px; }
.label svg { margin-bottom: 2px; }

.canvas { position: relative; height: 1213px; display: flex; flex-direction: column; justify-content: space-between; }
.scene { position: absolute; left: 0; top: 0; }
.profile { fill: #f0f8fe; stroke: #72c6ec; stroke-width: 2px; vector-effect: non-scaling-stroke; }
.centre { fill: #fff; stroke: #8e9499; stroke-width: 1.500px; }
.plane path { fill: #ffa500; fill-opacity: .3; stroke: #fdb849; stroke-width: 1px; stroke-dasharray: 1.500 1.500; stroke-opacity: .8; }
.arc { fill: none; }
.cube-text text { font: bold 11px "Liberation Sans", Arial, sans-serif; fill: #8b8f96; }
.axis text { font: 15.500px "Liberation Sans", Arial, sans-serif; text-anchor: middle; stroke-width: .4px; }
.angle-box { position: absolute; left: 1580px; top: 793px; width: 108px; height: 22px; background: #f0f0f0; display: flex; align-items: center; }
.dots { width: 4px; height: 18px; margin: 0 16px 0 4px; background: repeating-conic-gradient(#ccc 0 25%, #f6f6f6 0 50%) 0 0/4px 4px; }
.angle-input { box-sizing: border-box; width: 70px; height: 17px; margin: 0 5px 1px 0; border: 1px solid #c3c3c3; background: #fff; display: flex; align-items: center; padding-left: 27px; }
.angle-input b { width: 1px; height: 14px; background: #000; }

.top { display: flex; justify-content: space-between; align-items: flex-start; position: relative; }
.browser { margin: 4px 0 0 4px; width: 300px; }
.panel-head { box-sizing: border-box; width: 300px; height: 25px; border: 1px solid #c6c6c6; background: #f1f1f1; display: flex; align-items: center; padding-right: 1px; color: #666; }
.panel-head span, .d-head span { font-size: 11.500px; padding-bottom: 1px; }
.node { display: flex; align-items: center; height: 20px; margin: 5px 0 -1px -4px; }
.node + .node { margin-top: 5px; }
.cell { position: relative; height: 20px; background: #f1f1f1; display: flex; align-items: center; }
.root { width: 184px; margin-left: 7px; }
.hot { width: 134px; height: 16px; margin-left: 6px; background: #999; color: #fff; font-weight: bold; display: flex; align-items: center; }
.hot svg { margin-left: 3px; }
.hot span { margin-left: 15px; }
.twist { width: 18px; flex: none; }
.node .twist + .cell { flex: none; }
.name { margin-left: 14px; }
.hatch { position: absolute; left: 25px; right: 0; bottom: 1px; height: 4px; background: repeating-linear-gradient(125deg, #7c8fb3 0 2px, transparent 2px 5px); }

.dialog { box-sizing: border-box; width: 250px; height: 142px; margin: 124px 4px 0 0; border: 1px solid #c6c6c6; background: #f1f1f1; }
.d-head { height: 23px; border-bottom: 1px solid #c6c6c6; display: flex; align-items: center; color: #666; padding-right: 5px; }
.d-body { height: 80px; border-bottom: 1px solid #c6c6c6; }
.d-row { display: flex; align-items: center; }
.d-row label { width: 52px; margin-left: 12px; }
.d-row.line { height: 30px; }
.chip { box-sizing: border-box; width: 79px; height: 28px; background: #0696d7; border: 1px solid #48b4e5; color: #fff; display: flex; align-items: center; padding-left: 7px; gap: 5px; }
.clear { margin-left: 10px; }
.d-row.angle { margin-top: 4px; }
.field { box-sizing: border-box; width: 150px; height: 21px; margin-left: 7px; border: 1px solid #c3c3c3; background: #fff; padding: 1px 0 0 2px; }
.d-foot { display: flex; height: 36px; align-items: center; padding-left: 8px; }
.btn { box-sizing: border-box; width: 60px; height: 19px; margin: 0 0 0 10px; border: 1px solid #b5b5b5; background: #e9e9e9; color: #6a6a6a; text-align: center; line-height: 17px; font-size: 12.500px; }
.btn.ok { margin-left: 87px; }

.bottom { position: relative; display: flex; height: 30px; align-items: flex-start; }
.comments { margin: 1px 0 0 4px; border-top: 0; }
.comments > span { margin-left: 24px; padding-bottom: 0; }
.nav { margin-left: 849px; margin-top: 2px; width: 253px; height: 24px; background: #f1f1f1; display: flex; align-items: center; }
.status { margin: 6px 38px 0 auto; font-weight: bold; }

.timeline { box-sizing: border-box; height: 50px; border-top: 2px solid #c8c8c8; background: #f1f1f1; display: flex; align-items: center; padding-right: 13px; }
.history { margin: 1px 0 0 23px; }

.taskbar { height: 40px; background: linear-gradient(90deg, #4a4a4a 0, #4a4a4a 15%, #404040 30%, #484848 60%, #404040 75%, #4e4e4e 90%, #484848); display: flex; color: #fff; }
.slot { position: relative; height: 40px; display: flex; align-items: center; justify-content: center; }
.slot.on { background: #707070; }
.slot i { position: absolute; bottom: 0; left: 50%; transform: translateX(-50%); height: 2px; background: #99cdf5; }
.tray { margin-left: auto; height: 40px; display: flex; align-items: center; font: 12px/18px "Open Sans", "Noto Sans", sans-serif; padding-right: 20px; border-right: 1px solid #8a8a8a; margin-right: 4px; }
.lang { margin-left: 18px; }
.when { width: 52px; margin-left: 17px; display: flex; flex-direction: column; align-items: center; }
.note { margin-left: 18px; }
</style>
